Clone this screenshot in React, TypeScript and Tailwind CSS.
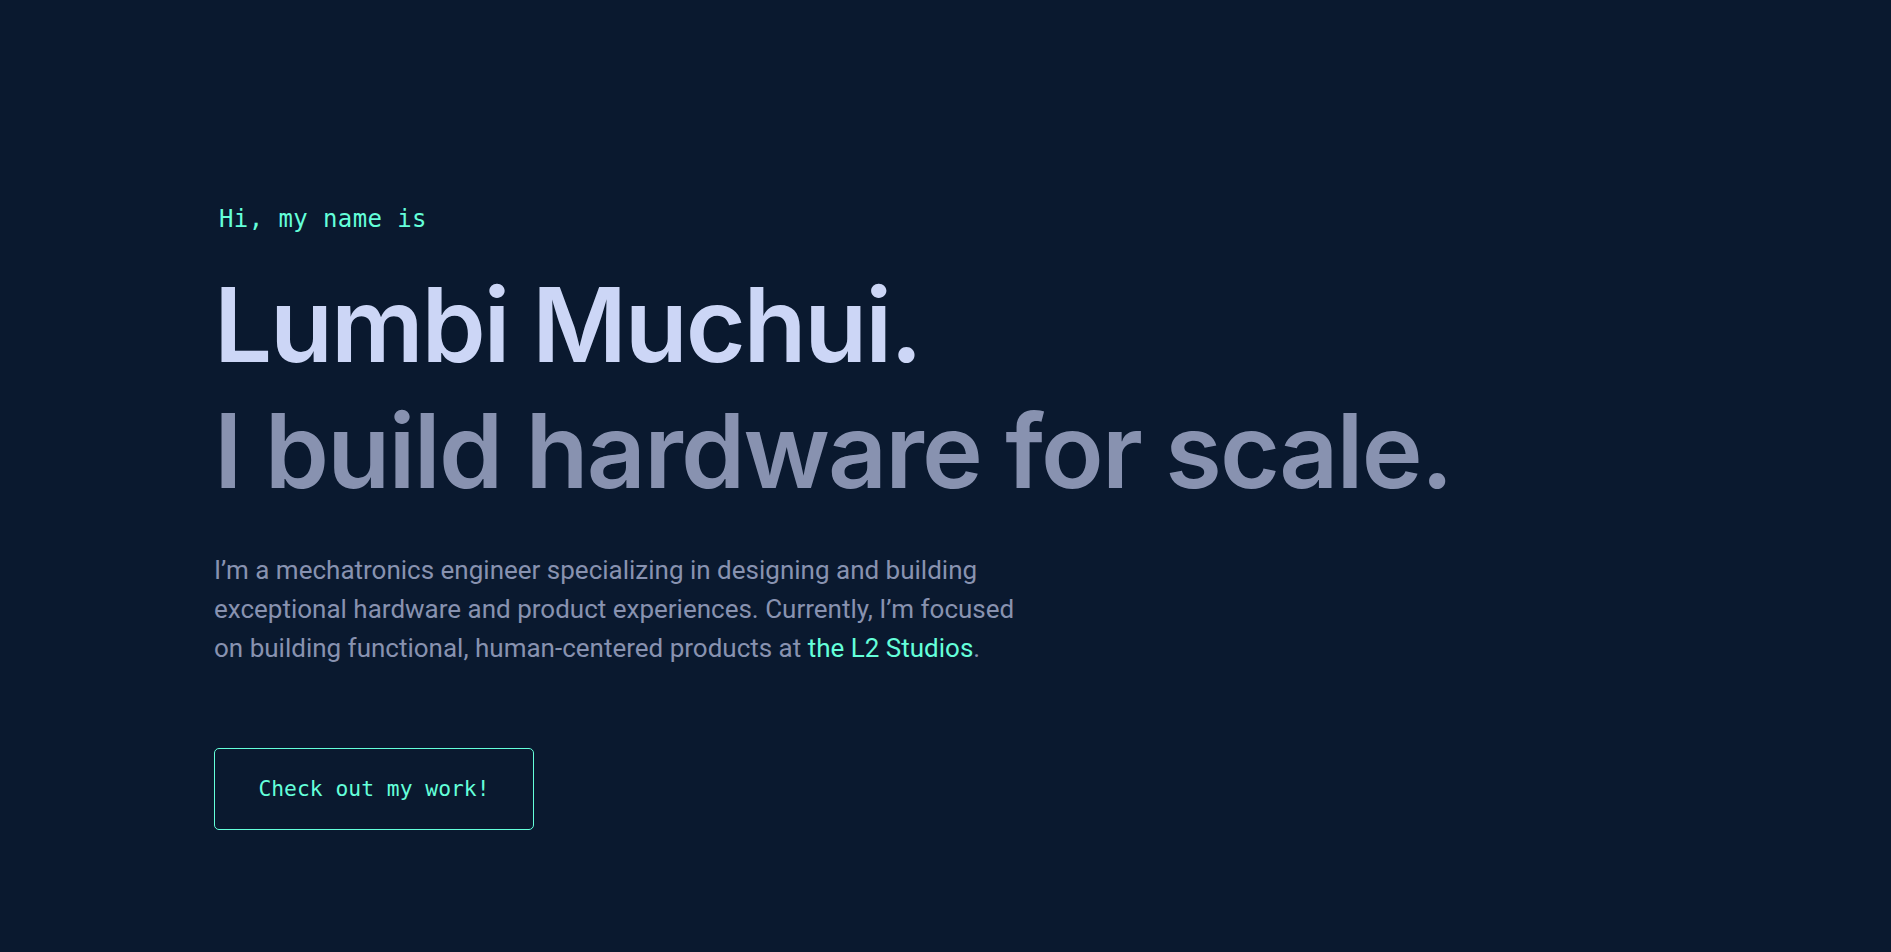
import React from "react";

export default function App() {
  return (
    <div className="min-h-[952px] w-full bg-[#0a192f] pl-[214px] pt-[204px]">
      <h1 className="ml-[5px] font-[family-name:'DejaVu_Sans_Mono','Liberation_Mono',monospace] text-[24px] leading-[30px] tracking-[0.4px] text-[#64ffda]">
        Hi, my name is
      </h1>
      <h2 className="mt-[34px] font-[family-name:Inter,'Noto_Sans',sans-serif] text-[103px] font-semibold leading-[1.1] tracking-[-2.2px] text-[#ccd6f6]">
        Lumbi Muchui.
      </h2>
      <h3 className="mt-[13px] font-[family-name:Inter,'Noto_Sans',sans-serif] text-[103px] font-semibold leading-[1.1] tracking-[-1.8px] text-[#8892b0]">
        I build hardware for scale.
      </h3>
      <p className="mt-[43px] whitespace-nowrap font-[family-name:Roboto,'Noto_Sans',sans-serif] text-[26px] leading-[39px] text-[#8892b0]">
        I’m a mechatronics engineer specializing in designing and building
        <br />
        exceptional hardware and product experiences. Currently, I’m focused
        <br />
        on building functional, human-centered products at{" "}
        <a href="#" className="text-[#64ffda]">
          the L2 Studios
        </a>
        .
      </p>
      <a
        href="#"
        className="mt-[80px] flex h-[82px] w-[320px] items-center justify-center rounded-[5px] border border-[#64ffda] font-[family-name:'DejaVu_Sans_Mono','Liberation_Mono',monospace] text-[21.33px] leading-none text-[#64ffda]"
      >
        Check out my work!
      </a>
    </div>
  );
}
